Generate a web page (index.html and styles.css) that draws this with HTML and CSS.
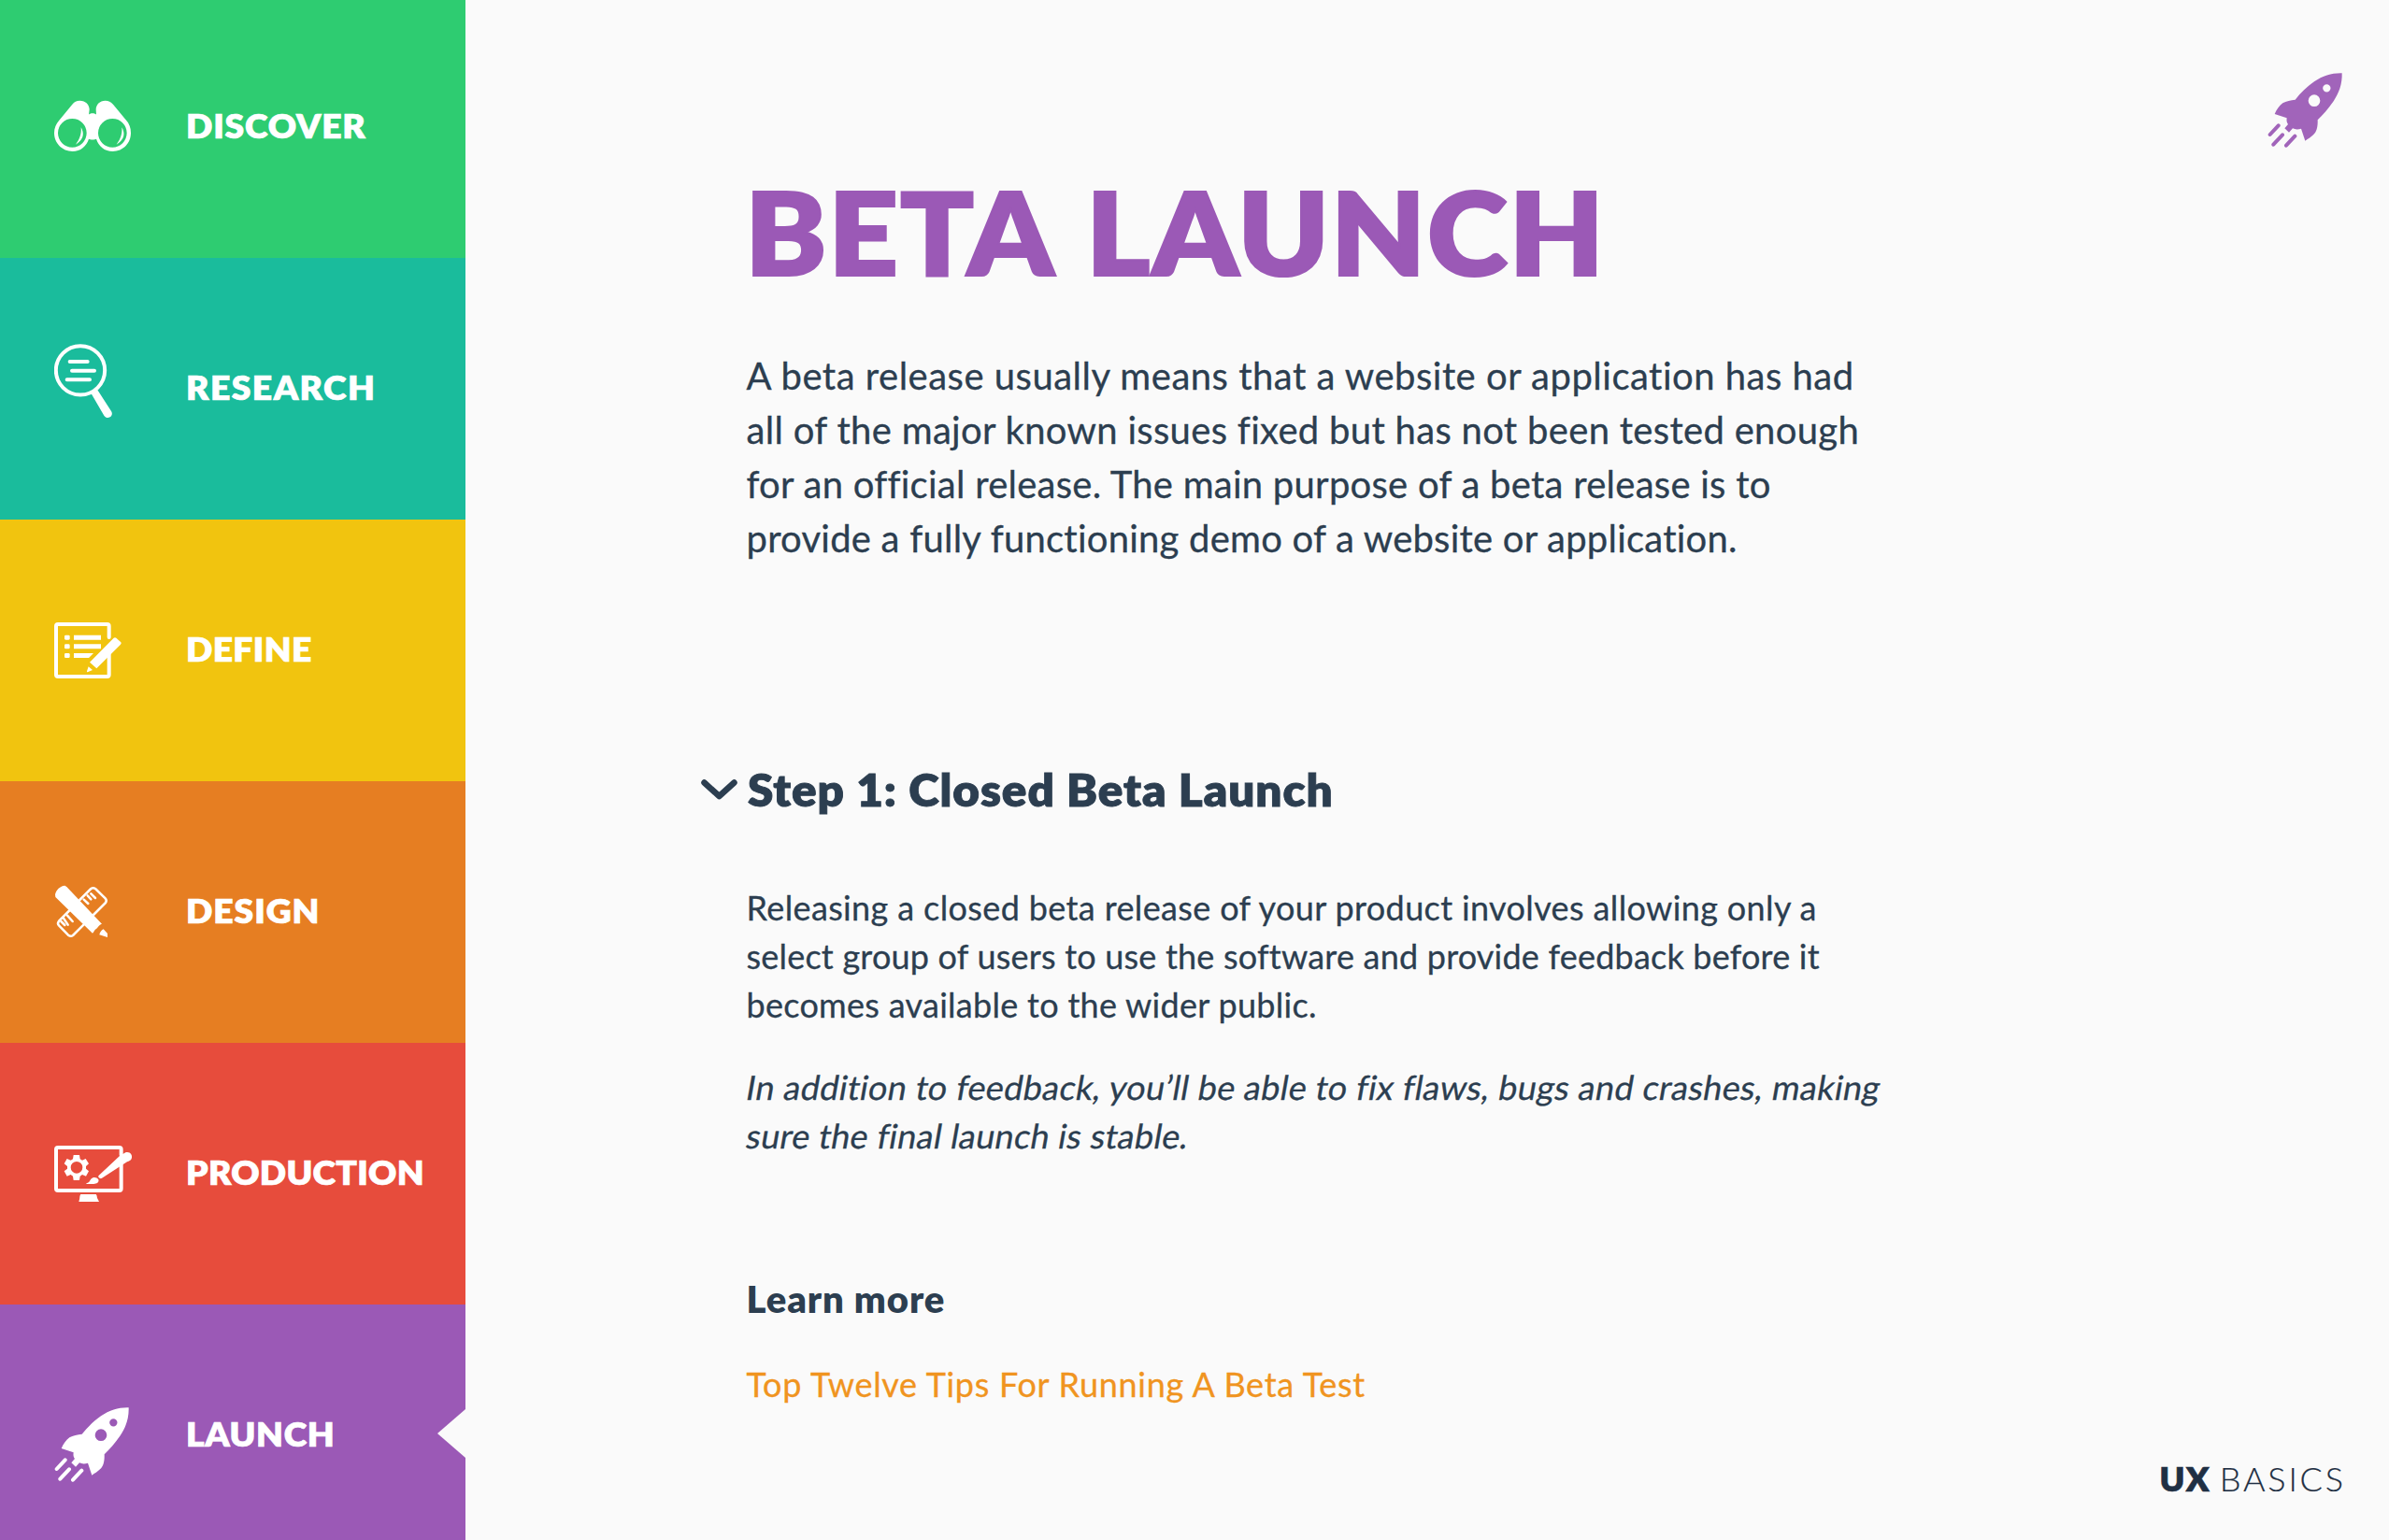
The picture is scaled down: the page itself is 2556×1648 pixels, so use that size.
FILE: index.html
```
<!DOCTYPE html>
<html lang="en">
<head>
<meta charset="utf-8">
<title>UX Basics – Beta Launch</title>
<link rel="stylesheet" href="styles.css">
</head>
<body>
<svg width="0" height="0" class="defs">
  <symbol id="rocket" viewBox="54 -12 270 300">
    <path fill-rule="evenodd" d="M293 49C294 84 284 111 266 139C250 163 230 184 215 199C216 222 211 239 201 247C193 255 184 260 175 266L162 227C153 230 142 230 135 226L123 239L109 226L120 213C115 207 115 200 116 193L77 180C84 165 92 153 103 145C114 138 129 136 143 134C160 113 181 92 204 76C232 57 262 48 293 49ZM204 118A19 19 0 1 0 204 156A19 19 0 1 0 204 118ZM244 84.500A12.500 12.500 0 1 0 244 109.500A12.500 12.500 0 1 0 244 84.500Z"/>
    <path class="line" stroke-width="12" d="M89 217L62 246M102 247L73 278M142 251L114 281"/>
  </symbol>
</svg>
<div class="app">
  <nav class="nav">
    <a class="item discover">
      <svg class="icon" viewBox="54 18 270 300">
        <path fill-rule="evenodd" d="M136 83C155 83 167 96 167 112L165 128C168 122 186 122 189 128L188 112C188 96 200 83 218 83C228 83 236 87 243 95L284 145C295 156 300 171 300 187C300 220 275 246 242 246C216 246 196 229 189 206C185 209 169 209 165 206C158 229 138 246 113 246C80 246 54 220 54 187C54 171 60 157 70 146L112 95C118 87 126 83 136 83ZM112 141A46 46 0 1 0 112 233A46 46 0 1 0 112 141ZM241 141A46 46 0 1 0 241 233A46 46 0 1 0 241 141Z"/>
        <path d="M140 169C151 188 150 207 123 224C136 206 142 190 140 169ZM271 169C282 188 281 207 254 224C267 206 273 190 271 169Z"/>
      </svg>
      <span class="label">DISCOVER</span>
    </a>
    <a class="item research">
      <svg class="icon" viewBox="54 48 270 300">
        <circle class="line" cx="138" cy="139" r="78.500" stroke-width="12"/>
        <path class="line" stroke-width="12" d="M104 111H161M111 140H183M95 169H168"/>
        <path d="M173 214L193 202L237 270C242 278 239 286 233 289C226 293 219 291 214 284Z"/>
      </svg>
      <span class="label">RESEARCH</span>
    </a>
    <a class="item define">
      <svg class="icon" viewBox="54 -12 270 300">
        <path class="line" stroke-width="12" d="M230 96V60Q230 54 224 54H66Q60 54 60 60V216Q60 222 66 222H224Q230 222 230 216V146"/>
        <path d="M117 89H204V104H117ZM117 118H204V133H117ZM117 147H180L165 162H117Z"/>
        <rect x="87" y="89" width="17" height="15" rx="4"/><rect x="87" y="118" width="17" height="15" rx="4"/><rect x="87" y="147" width="17" height="15" rx="4"/>
        <path d="M245 98Q249 95 253 98L268 112Q271 115 267 119L190 196L168 176ZM164 190L177 201L161 208Q158 208 159 205Z"/>
      </svg>
      <span class="label">DEFINE</span>
    </a>
    <a class="item design">
      <svg class="icon" viewBox="54 -12 270 300">
        <path class="line" stroke-width="7.500" d="M136 99L172 63Q179 58 186 63L218 94Q224 101 219 108L180 147M104 132L69 167Q63 175 69 181L99 212Q107 218 114 213L149 178"/>
        <path class="line" stroke-width="7.500" d="M149 98L163 111M161 85L172 97M172 79L186 93M76 168L88 180M84 158L98 179M96 149L113 168"/>
        <path d="M57 82C60 67 73 54 88 53L94 57L207 176C196 180 194 188 189 192C184 193 182 202 177 206L58 90ZM212 193L225 207V219L199 211C201 203 205 197 212 193Z"/>
      </svg>
      <span class="label">DESIGN</span>
    </a>
    <a class="item production">
      <svg class="icon" viewBox="54 -12 270 300">
        <path class="line" stroke-width="12" d="M269 78V60Q269 54 263 54H66Q60 54 60 60V186Q60 192 66 192H263Q269 192 269 186V108"/>
        <path d="M139 204H188Q191 206 192 216L198 228H133Q136 220 136 212Q137 206 139 204Z"/>
        <path d="M196 145L264 81L283 70C297 66 307 78 302 90C300 95 294 98 288 100L206 153C200 155 194 150 196 145ZM172 155C179 147 191 149 196 157C199 166 190 171 181 171H158C154 170 158 168 162 167C167 165 168 160 172 155Z"/>
        <path fill-rule="evenodd" d="M116 78H135L137 91L144 95L155 90L165 106L156 114V122L165 130L156 146L144 141L137 146L135 159H116L114 146L107 141L95 146L86 130L96 122V114L86 106L95 90L107 95L114 91ZM126 99A19 19 0 1 0 126 137A19 19 0 1 0 126 99Z"/>
      </svg>
      <span class="label">PRODUCTION</span>
    </a>
    <a class="item launch">
      <svg class="icon"><use href="#rocket"/></svg>
      <span class="label">LAUNCH</span>
      <span class="notch"></span>
    </a>
  </nav>
  <main class="main">
    <h1>BETA LAUNCH</h1>
    <p class="intro">
      <span class="line1">A beta release usually means that a website or application has had</span>
      <span class="line2">all of the major known issues fixed but has not been tested enough</span>
      <span class="line3">for an official release. The main purpose of a beta release is to</span>
      <span class="line4">provide a fully functioning demo of a website or application.</span>
    </p>
    <div class="step">
      <svg class="chevron" viewBox="0 0 39 22"><path class="line" stroke-width="6.500" d="M3.500 3.500L19.500 18L35.500 3.500"/></svg>
      <h2>Step 1: Closed Beta Launch</h2>
    </div>
    <p class="text">
      <span class="line1">Releasing a closed beta release of your product involves allowing only a</span>
      <span class="line2">select group of users to use the software and provide feedback before it</span>
      <span class="line3">becomes available to the wider public.</span>
    </p>
    <p class="text note">
      <span class="line1">In addition to feedback, you’ll be able to fix flaws, bugs and crashes, making</span>
      <span class="line2">sure the final launch is stable.</span>
    </p>
    <h3>Learn more</h3>
    <a class="link">Top Twelve Tips For Running A Beta Test</a>
  </main>
  <aside class="side">
    <svg class="icon badge"><use href="#rocket"/></svg>
    <div class="brand"><b>UX</b><span>BASICS</span></div>
  </aside>
</div>
</body>
</html>
```
FILE: styles.css
```
* { box-sizing: border-box; }
body { margin: 0; background: #fafafa; color: #2c3e50; font-family: Lato, "Open Sans", sans-serif; }
h1, h2, h3, p { margin: 0; }
svg { display: block; fill: currentColor; flex: none; }
.line { fill: none; stroke: currentColor; stroke-linecap: round; stroke-linejoin: round; }
.defs { display: none; }

.app { display: flex; height: 1648px; overflow: hidden; }

.nav { width: 498px; flex: none; color: #fff; }
.item { display: flex; align-items: center; gap: 50.500px; height: 280px; padding-left: 58px; }
.icon { width: 90px; height: 100px; }
.label { font-weight: 800; font-size: 36px; line-height: 44px; padding-bottom: 4px; white-space: nowrap; -webkit-text-stroke: 0.7px currentColor; transform: scaleX(1.035); transform-origin: left; }
.research { background: #1abc9c; letter-spacing: 1.4px; }
.define { background: #f1c40f; letter-spacing: 0.3px; }
.design { background: #e67e22; letter-spacing: 0.9px; }
.production { background: #e74c3c; letter-spacing: 0.25px; }
.launch { background: #9b59b6; letter-spacing: 0.6px; }
.discover { height: 276px; align-items: flex-start; background: #2ecc71; letter-spacing: 0.8px; }
.discover .icon { margin-top: 86px; }
.discover .label { margin-top: 112px; }
.notch { margin-left: auto; margin-top: -4px; width: 30px; height: 52px; background: #fafafa; clip-path: polygon(100% 0, 0 50%, 100% 100%); }

.main { width: 1260px; flex: none; margin-left: 300.500px; padding-top: 169px; white-space: nowrap; }
h1 { font-weight: 800; font-size: 124px; line-height: 156px; letter-spacing: 1.5px; word-spacing: 5px; color: #9b59b6; margin-left: -2px; -webkit-text-stroke: 2px currentColor; transform: scaleX(1.055); transform-origin: left; }
.intro { margin-top: 48px; font-size: 40px; line-height: 58px; }
.intro, .text, .link { -webkit-text-stroke: 0.3px currentColor; }
.intro span, .text span { display: block; }
.intro .line1 { letter-spacing: 0.5px; }
.intro .line2 { letter-spacing: 0.31px; }
.intro .line3 { letter-spacing: 0.255px; }
.intro .line4 { letter-spacing: 0.23px; }
.step { display: flex; gap: 11px; margin: 210px 0 0 -49px; }
.chevron { width: 39px; height: 22px; margin-top: 19px; }
h2 { font-weight: 800; font-size: 48px; line-height: 60px; letter-spacing: 0.9px; -webkit-text-stroke: 0.9px currentColor; transform: scaleX(1.03); transform-origin: left; }
.text { margin-top: 70px; font-size: 36px; line-height: 52px; }
.text .line1 { letter-spacing: 0.37px; }
.text .line2 { letter-spacing: 0.21px; }
.text .line3 { letter-spacing: 0.29px; }
.note { margin-top: 36px; }
.note span { width: max-content; transform: skewX(-10deg); }
.note .line1 { letter-spacing: 0.345px; }
.note .line2 { letter-spacing: 0.3px; }
h3 { margin-top: 125px; font-weight: 800; font-size: 40px; line-height: 48px; letter-spacing: 0.9px; }
.link { display: block; margin-top: 41px; font-size: 36px; line-height: 52px; letter-spacing: 0.7px; color: #f09420; }

.side { flex: 1; display: flex; flex-direction: column; justify-content: space-between; align-items: flex-end; padding: 58px 40px 44px 0; }
.badge { color: #9b59b6; opacity: 0.93; }
.brand { display: flex; gap: 10px; margin-right: 9px; font-size: 36px; line-height: 44px; color: #1f2f43; }
.brand b { font-weight: 800; letter-spacing: 1.2px; -webkit-text-stroke: 0.7px currentColor; }
.brand span { font-weight: 300; letter-spacing: 2.8px; margin-right: -2.800px; -webkit-text-stroke: 0.2px currentColor; }
```
